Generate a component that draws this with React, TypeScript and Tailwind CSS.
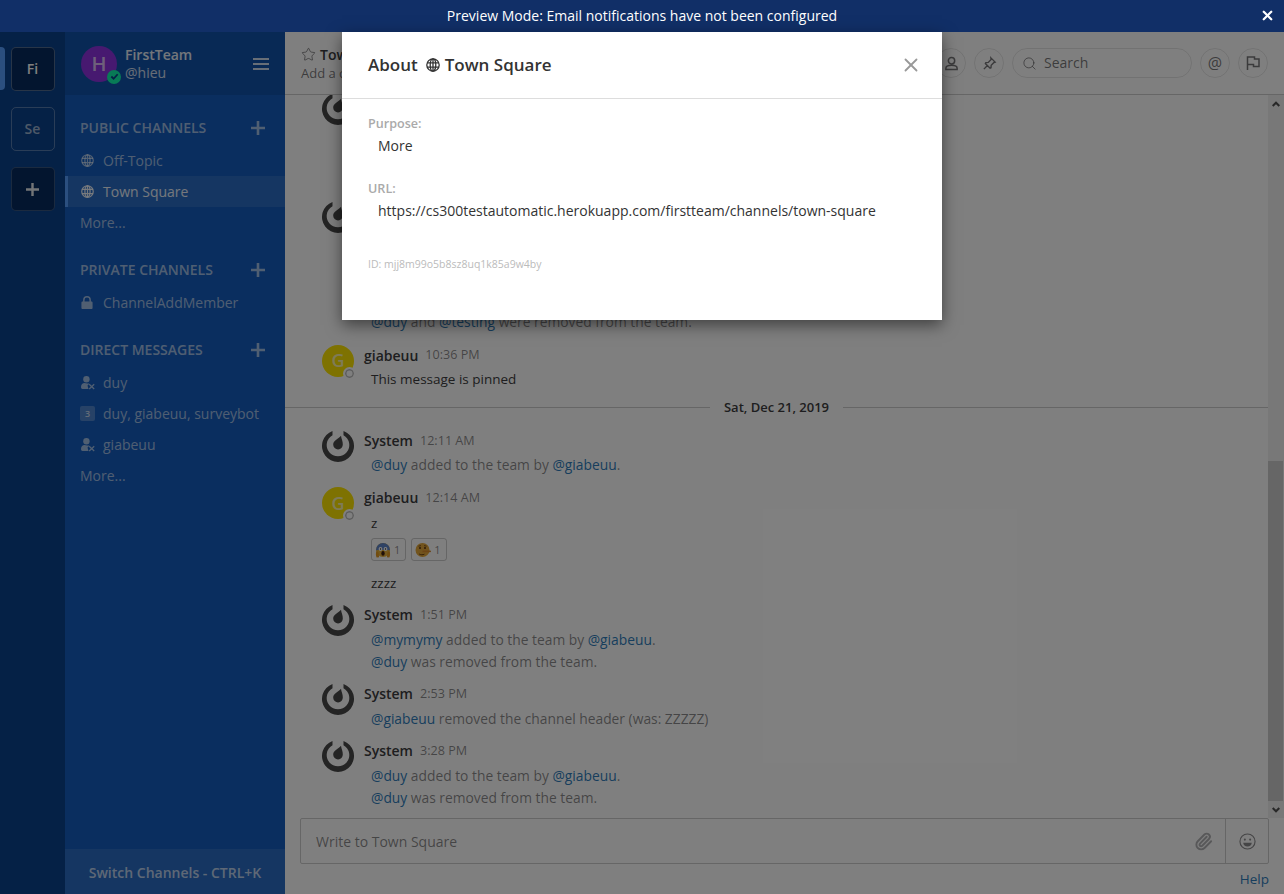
import React from "react";
import { Paperclip, Search, Star, X } from "lucide-react";

function Globe({ className = "" }: { className?: string }) {
  return (
    <svg viewBox="0 0 14 14" className={className} fill="none" stroke="currentColor" strokeWidth="1.3">
      <circle cx="7" cy="7" r="6.2" />
      <ellipse cx="7" cy="7" rx="2.8" ry="6.2" />
      <path d="M7 .8v12.4M1 4.8h12M1 9.2h12" />
    </svg>
  );
}
function Lock({ className = "" }: { className?: string }) {
  return (
    <svg viewBox="0 0 12 14" className={className} fill="currentColor">
      <path d="M1.2 6h.6V4.2a4.2 4.2 0 0 1 8.4 0V6h.6c.6 0 1.2.5 1.2 1.1v5.7c0 .6-.6 1.2-1.2 1.2H1.2C.6 14 0 13.400 0 12.800V7.100C0 6.500.6 6 1.200 6zm2.200 0h5.200V4.200a2.600 2.600 0 0 0-5.200 0V6z" />
    </svg>
  );
}
function UserX({ className = "" }: { className?: string }) {
  return (
    <svg viewBox="0 0 14 14" className={className} fill="currentColor">
      <circle cx="5.400" cy="3.300" r="3.200" />
      <path d="M0 11C0 8.500 1.700 7 3.500 7c1 0 1.900.6 3 .6.800 0 1.300-.1 1.800.1L6.500 9.500 7.500 13H1.500C.6 13 0 12.100 0 11z" />
      <path d="M8.200 8.300l5 4.700M13.200 8.300l-5 4.700" stroke="currentColor" strokeWidth="1.300" fill="none" />
    </svg>
  );
}
function Plus({ className = "" }: { className?: string }) {
  return (
    <svg viewBox="0 0 14 14" className={className} fill="currentColor">
      <path d="M5.700 0h2.600v5.700H14v2.600H8.300V14H5.700V8.300H0V5.700h5.700z" />
    </svg>
  );
}
function MatterLogo() {
  return (
    <svg viewBox="0 0 32 32" className="h-8 w-8 shrink-0" fill="#484848">
      <path d="M10.500 .9A16 16 0 1 0 21.500 .9L21.500 5.200A11.300 11.300 0 1 1 10.500 5.200Z" />
      <path d="M19 5.800c.3 3 2 5.500 1.800 8.700a4.800 4.800 0 0 1-9.600.2c-.1-4 4.800-5.700 7.800-8.900z" />
    </svg>
  );
}
function FearEmoji() {
  return (
    <svg viewBox="0 0 16 16" className="h-4 w-4">
      <circle cx="8" cy="8" r="7" fill="#e8b23a" />
      <path d="M1 8a7 7 0 0 1 14 0c-1 .5-2 0-3 0H4c-1 0-2 .5-3 0z" fill="#5f85c9" />
      <circle cx="5.500" cy="7" r="1.900" fill="#fff" />
      <circle cx="10.500" cy="7" r="1.900" fill="#fff" />
      <circle cx="5.500" cy="7" r=".7" fill="#222" />
      <circle cx="10.500" cy="7" r=".7" fill="#222" />
      <ellipse cx="8" cy="11.400" rx="1.700" ry="2.400" fill="#402010" />
      <path d="M1.400 9.500c1-.5 2 .5 2.300 2l.4 3.700-2.500.4c-.8-2-1-4.500-.2-6.100zM14.600 9.500c-1-.5-2 .5-2.300 2l-.4 3.700 2.500.4c.8-2 1-4.500.2-6.100z" fill="#e49a22" />
    </svg>
  );
}
function LyingEmoji() {
  return (
    <svg viewBox="0 0 16 16" className="h-4 w-4">
      <circle cx="7.500" cy="8" r="7" fill="#e5a83a" />
      <circle cx="5" cy="6" r="1" fill="#5a3510" />
      <circle cx="10" cy="6" r="1" fill="#5a3510" />
      <path d="M3.400 4.200l2.600-.6M9 3.600l2.600.6" stroke="#5a3510" strokeWidth=".7" />
      <path d="M7.500 8.400h7.600a.9.9 0 0 1 0 1.800H7.500z" fill="#d98a2c" />
      <path d="M4.200 12c1.600 1 3.600 1 5.200.2" stroke="#5a3510" strokeWidth=".9" fill="none" />
    </svg>
  );
}

const at = "text-[#2f7dbb]";

function Channel({ icon, label, active = false }: { icon: React.ReactNode; label: string; active?: boolean }) {
  return (
    <div
      className={
        active
          ? "flex h-[31px] items-center border-l-[3px] border-[#579eff] bg-[#2b6dc5] pl-[13px] text-white/90"
          : "flex h-[31px] items-center pl-4 text-white/60"
      }
    >
      <span className="flex w-[22px] shrink-0 items-center">{icon}</span>
      <span className="text-sm">{label}</span>
    </div>
  );
}

function Section({ title, className = "" }: { title: string; className?: string }) {
  return (
    <div className={`mb-1 flex h-[26px] items-center justify-between pl-[15px] pr-[20px] text-white/60 ${className}`}>
      <span className="text-sm font-semibold">{title}</span>
      <Plus className="h-[14px] w-[14px]" />
    </div>
  );
}

function More() {
  return <div className="flex h-[31px] items-center pl-[15px] text-sm text-white/60">More...</div>;
}

function Post({
  name,
  time,
  avatar,
  children,
  className = "",
}: {
  name: string;
  time: string;
  avatar: "system" | "g";
  children: React.ReactNode;
  className?: string;
}) {
  return (
    <div className={`flex pl-[37px] pr-[20px] ${className}`}>
      <div className="relative h-8 w-8 shrink-0">
        {avatar === "system" ? (
          <MatterLogo />
        ) : (
          <>
            <div className="flex h-8 w-8 items-center justify-center rounded-full bg-[#fce402] text-[18px] font-semibold text-white/70">G</div>
            <div className="absolute bottom-[-3px] right-[-2px] h-[13px] w-[13px] rounded-full border-2 border-white bg-white [box-shadow:inset_0_0_0_1.5px_#bbb]" />
          </>
        )}
      </div>
      <div className="ml-[10px] min-w-0 flex-1">
        <div className="flex h-[22px] items-center">
          <span className="text-sm font-semibold text-[#3d3c40]">{name}</span>
          <span className="ml-[7px] text-[12.6px] text-[#3d3c40]/60">{time}</span>
        </div>
        <div className="mt-[3px] pl-[7px] text-[13.5px] leading-[22px]">{children}</div>
      </div>
    </div>
  );
}

const sys = "text-[13.82px] text-[#3d3c40]/60";

function Reaction({ children, n }: { children: React.ReactNode; n: string }) {
  return (
    <div className="mr-[5px] flex h-[23px] items-center rounded-[3px] border border-black/20 pl-[3px] pr-[5px]">
      {children}
      <span className="ml-[3px] text-[11px] text-[#3d3c40]/60">{n}</span>
    </div>
  );
}

function RoundBtn({ children }: { children: React.ReactNode }) {
  return (
    <div className="flex h-[30px] w-[30px] shrink-0 items-center justify-center rounded-full border border-black/10 text-[#3d3c40]/70">
      {children}
    </div>
  );
}

export default function App() {
  return (
    <div className="flex h-screen w-full flex-col overflow-hidden bg-white font-['Open_Sans',sans-serif] text-[#3d3c40]">
      <div className="relative flex h-8 shrink-0 items-center justify-center bg-[#112f67] text-sm text-white">
        Preview Mode: Email notifications have not been configured
        <X className="absolute right-[9px] top-[8px] h-[15px] w-[15px]" strokeWidth={3.6} />
      </div>

      <div className="relative flex min-h-0 flex-1">
        {/* Team bar */}
        <div className="flex w-[65px] shrink-0 flex-col gap-4 bg-[#0b428c] pt-[15px]">
          <div className="relative flex justify-center">
            <div className="absolute left-0 top-0 h-[43px] w-[5px] rounded-r-[4px] bg-[#579eff]" />
            <div className="flex h-[44px] w-[44px] items-center justify-center rounded-[5px] border border-white/30 bg-[#062a5e] text-sm font-semibold text-white">
              Fi
            </div>
          </div>
          <div className="flex justify-center">
            <div className="flex h-[44px] w-[44px] items-center justify-center rounded-[5px] border border-white/30 text-sm font-semibold text-white/60">
              Se
            </div>
          </div>
          <div className="flex justify-center">
            <div className="flex h-[44px] w-[44px] items-center justify-center rounded-[5px] border border-white/20 bg-[#062a5e] text-white/90">
              <Plus className="h-[13px] w-[13px]" />
            </div>
          </div>
        </div>

        {/* Sidebar */}
        <div className="flex w-[220px] shrink-0 flex-col bg-[#145dbf]">
          <div className="flex h-[63px] shrink-0 items-center bg-[#1153ab] pl-[16px] pr-4">
            <div className="relative h-9 w-9 shrink-0">
              <div className="flex h-9 w-9 items-center justify-center rounded-full bg-[#8f33e0] text-[20px] font-semibold text-white/70">H</div>
              <div className="absolute bottom-[-2px] right-[-4px] flex h-[14px] w-[14px] items-center justify-center rounded-full bg-[#10f5ac]">
                <svg viewBox="0 0 10 10" className="h-[9px] w-[9px]" fill="none" stroke="#0b428c" strokeWidth="2">
                  <path d="M1.500 5l2.500 2.500L8.500 2.500" />
                </svg>
              </div>
            </div>
            <div className="ml-2 flex-1">
              <div className="text-sm font-semibold leading-[18px] text-white/90">FirstTeam</div>
              <div className="text-sm leading-[18px] text-white/80">@hieu</div>
            </div>
            <div className="flex flex-col gap-[3px]">
              <div className="h-[2px] w-4 bg-white/80" />
              <div className="h-[2px] w-4 bg-white/80" />
              <div className="h-[2px] w-4 bg-white/80" />
            </div>
          </div>

          <div className="flex-1 pt-[20px]">
            <Section title="PUBLIC CHANNELS" />
            <Channel icon={<Globe className="h-[13px] w-[13px]" />} label="Off-Topic" />
            <Channel active icon={<Globe className="h-[13px] w-[13px]" />} label="Town Square" />
            <More />
            <Section title="PRIVATE CHANNELS" className="mt-[19px]" />
            <Channel icon={<Lock className="h-[13px] w-[12px]" />} label="ChannelAddMember" />
            <Section title="DIRECT MESSAGES" className="mt-[19px]" />
            <Channel icon={<UserX className="h-[14px] w-[14px]" />} label="duy" />
            <Channel
              icon={
                <span className="-ml-[1px] flex h-[15px] w-[15px] items-center justify-center rounded-[2px] bg-white/25 text-[9px] font-semibold text-white/70">
                  3
                </span>
              }
              label="duy, giabeuu, surveybot"
            />
            <Channel icon={<UserX className="h-[14px] w-[14px]" />} label="giabeuu" />
            <More />
          </div>

          <div className="flex h-[45px] shrink-0 items-center justify-center bg-[#2b6dc5] pt-[2px] text-sm font-semibold text-white/70">
            Switch Channels - CTRL+K
          </div>
        </div>

        {/* Main */}
        <div className="flex min-w-0 flex-1 flex-col">
          <div className="flex h-[63px] shrink-0 items-center border-b border-black/20 pl-4 pr-4">
            <div className="min-w-0 flex-1">
              <div className="flex items-center text-sm font-semibold leading-[20px]">
                <Star className="mr-1 h-[15px] w-[15px] text-[#3d3c40]/70" strokeWidth={1.3} />
                Town Square
              </div>
              <div className="text-[13px] leading-[17px] text-[#3d3c40]/70">Add a channel description</div>
            </div>
            <div className="flex items-center gap-2">
              <RoundBtn>
                <svg viewBox="0 0 16 16" className="h-[15px] w-[15px]" fill="none" stroke="currentColor" strokeWidth="1.6">
                  <circle cx="8" cy="5" r="3.400" />
                  <path d="M2 14.500v-1.500c0-2 2-3.200 6-3.200s6 1.200 6 3.200v1.500z" />
                </svg>
              </RoundBtn>
              <RoundBtn>
                <svg viewBox="0 0 16 16" className="h-[15px] w-[15px]" fill="none" stroke="currentColor" strokeWidth="1.5">
                  <path d="M9.500 2l4.500 4.500-1.200.4-3 3-.2 2.600-1 .5-5-5 .5-1 2.600-.2 3-3zM5.500 10.500L2 14" />
                </svg>
              </RoundBtn>
              <div className="flex h-[30px] w-[180px] items-center rounded-full border border-black/10 pl-[9px] text-sm text-[#3d3c40]/70">
                <Search className="h-[15px] w-[15px]" strokeWidth={1.3} />
                <span className="ml-[7px]">Search</span>
              </div>
              <RoundBtn>
                <span className="text-[16px] leading-none">@</span>
              </RoundBtn>
              <RoundBtn>
                <svg viewBox="0 0 16 16" className="h-[16px] w-[16px]" fill="none" stroke="currentColor" strokeWidth="1.5">
                  <path d="M2.500 15V2h7v2h4.500v7.500H8.500v-2h-6" />
                </svg>
              </RoundBtn>
            </div>
          </div>

          <div className="flex min-h-0 flex-1">
            <div className="flex min-w-0 flex-1 flex-col justify-end overflow-hidden pb-[9px]">
              <Post name="System" time="9:05 PM" avatar="system">
                <span className={sys}>
                  <span className={at}>@duy</span> added to the team by <span className={at}>@giabeuu</span>.
                </span>
              </Post>
              <div className="mt-[39px] h-px bg-black/20" />
              <Post name="System" time="9:30 PM" avatar="system" className="mt-[22px]">
                <div className={sys}>
                  <div><span className={at}>@testing</span> added to the team by <span className={at}>@giabeuu</span>.</div>
                  <div><span className={at}>@duy</span> was removed from the team.</div>
                  <div><span className={at}>@testing</span> was removed from the team.</div>
                  <div><span className={at}>@duy</span> added to the team by <span className={at}>@giabeuu</span>.</div>
                  <div className="-mt-[3px]"><span className={at}>@duy</span> and <span className={at}>@testing</span> were removed from the team.</div>
                </div>
              </Post>
              <Post name="giabeuu" time="10:36 PM" avatar="g" className="mt-[12px]">
                <div className="-mt-[2px] mb-[2px]">This message is pinned</div>
              </Post>
              <div className="mt-[6px] mb-[13px] flex h-5 items-center">
                <div className="h-px flex-1 bg-black/20" />
                <span className="px-[14px] text-[13px] font-semibold">Sat, Dec 21, 2019</span>
                <div className="h-px flex-1 bg-black/20" />
              </div>
              <Post name="System" time="12:11 AM" avatar="system">
                <div className={`-mt-px mb-px ${sys}`}>
                  <span className={at}>@duy</span> added to the team by <span className={at}>@giabeuu</span>.
                </div>
              </Post>
              <Post name="giabeuu" time="12:14 AM" avatar="g" className="mt-[10px]">
                <div>z</div>
                <div className="mt-1 flex">
                  <Reaction n="1"><FearEmoji /></Reaction>
                  <Reaction n="1"><LyingEmoji /></Reaction>
                </div>
                <div className="mt-[11px]">zzzz</div>
              </Post>
              <Post name="System" time="1:51 PM" avatar="system" className="mt-[10px]">
                <div className={sys}>
                  <div><span className={at}>@mymymy</span> added to the team by <span className={at}>@giabeuu</span>.</div>
                  <div><span className={at}>@duy</span> was removed from the team.</div>
                </div>
              </Post>
              <Post name="System" time="2:53 PM" avatar="system" className="mt-[10px]">
                <span className={sys}>
                  <span className={at}>@giabeuu</span> removed the channel header (was: ZZZZZ)
                </span>
              </Post>
              <Post name="System" time="3:28 PM" avatar="system" className="mt-[10px]">
                <div className={sys}>
                  <div><span className={at}>@duy</span> added to the team by <span className={at}>@giabeuu</span>.</div>
                  <div><span className={at}>@duy</span> was removed from the team.</div>
                </div>
              </Post>
            </div>

            {/* Scrollbar */}
            <div className="flex w-4 shrink-0 flex-col bg-[#f1f1f1]">
              <div className="flex h-[17px] shrink-0 items-center justify-center">
                <svg viewBox="0 0 8 6" className="h-[6px] w-2" fill="none" stroke="#505050" strokeWidth="2">
                  <path d="M.7 5L4 1.700 7.300 5" />
                </svg>
              </div>
              <div className="flex flex-1 flex-col justify-end">
                <div className="h-[340px] w-[15px] bg-[#cdcdcd]" />
              </div>
              <div className="flex h-[17px] shrink-0 items-center justify-center">
                <svg viewBox="0 0 8 6" className="h-[6px] w-2" fill="none" stroke="#505050" strokeWidth="2">
                  <path d="M.7 1L4 4.300 7.300 1" />
                </svg>
              </div>
            </div>
          </div>

          {/* Composer */}
          <div className="shrink-0 pl-[15px] pr-[15px]">
            <div className="flex h-[46px] items-center rounded-[2px] border border-black/20">
              <div className="flex-1 pl-[15px] pt-[1px] text-sm text-[#3d3c40]/60">Write to Town Square</div>
              <div className="flex h-full w-[43px] items-center justify-center">
                <Paperclip className="h-[19px] w-[19px] text-[#3d3c40]/40" strokeWidth={2.4} />
              </div>
              <div className="flex h-full w-[43px] items-center justify-center border-l border-black/20">
                <svg viewBox="0 0 18 18" className="h-[17px] w-[17px] text-[#3d3c40]/60" fill="none" stroke="currentColor" strokeWidth="1.2">
                  <circle cx="9" cy="9" r="8" />
                  <circle cx="6.200" cy="7" r="1.100" fill="currentColor" stroke="none" />
                  <circle cx="11.800" cy="7" r="1.100" fill="currentColor" stroke="none" />
                  <path d="M4.500 10.400h9c0 2.400-2 4-4.500 4s-4.500-1.600-4.500-4z" fill="currentColor" stroke="none" />
                </svg>
              </div>
            </div>
            <div className="flex h-[30px] items-center justify-end text-[13.5px] text-[#2f7dbb]">Help</div>
          </div>
        </div>

        {/* Backdrop + modal */}
        <div className="absolute inset-0 flex items-start justify-center bg-black/50">
          <div className="h-[288px] w-[600px] bg-white text-[#333] shadow-[0_5px_15px_rgba(0,0,0,0.5)]">
            <div className="flex h-[67px] items-center border-b border-[#ddd] pl-[26px] pr-[20px]">
              <div className="flex flex-1 items-center text-[17px] font-semibold">
                About
                <Globe className="ml-2 mr-[5px] h-[14px] w-[14px]" />
                Town Square
              </div>
              <X className="h-[22px] w-[22px] text-[#999]" strokeWidth={2} />
            </div>
            <div className="pl-[26px] pt-[15px]">
              <div className="text-[12.6px] font-semibold leading-[20px] text-[#aaa]">Purpose:</div>
              <div className="mt-[1px] pl-[10px] text-sm leading-[22px]">More</div>
              <div className="mt-[22px] text-[12.6px] font-semibold leading-[20px] text-[#aaa]">URL:</div>
              <div className="mt-[1px] pl-[10px] text-sm leading-[22px]">
                https://cs300testautomatic.herokuapp.com/firstteam/channels/town-square
              </div>
              <div className="mt-[35px] text-[10.5px] text-[#bbb]">ID: mjj8m99o5b8sz8uq1k85a9w4by</div>
            </div>
          </div>
        </div>
      </div>
    </div>
  );
}
